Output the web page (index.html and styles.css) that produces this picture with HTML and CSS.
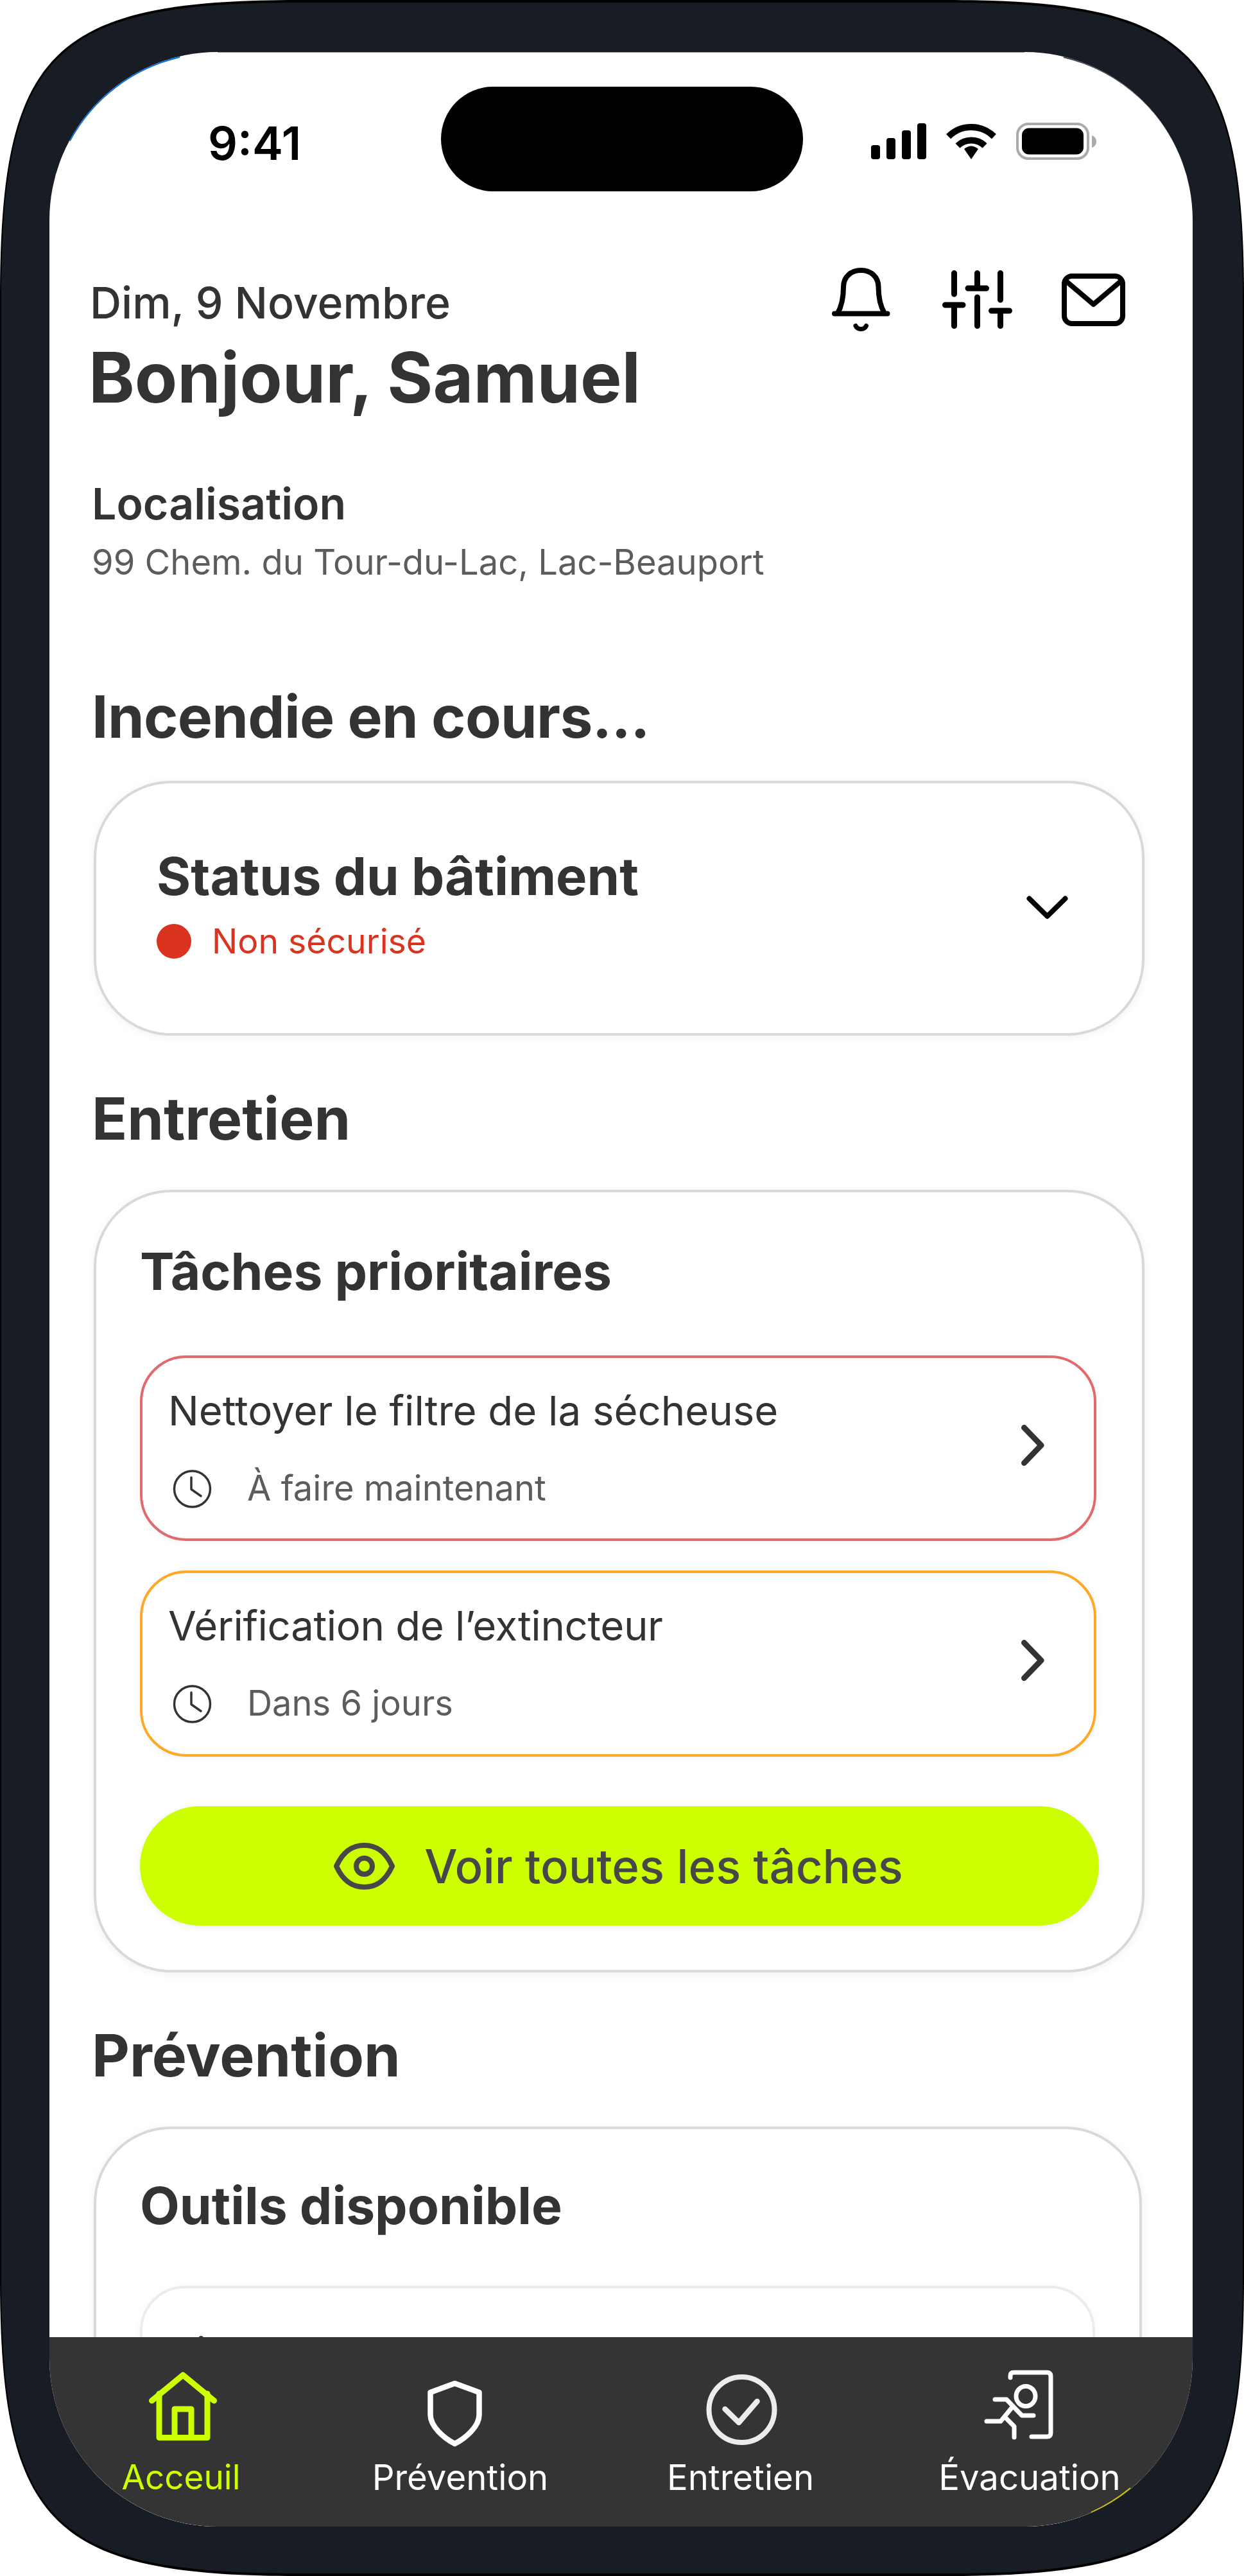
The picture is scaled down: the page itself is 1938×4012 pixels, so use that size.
FILE: index.html
```html
<!DOCTYPE html>
<html lang="fr">
<head>
<meta charset="utf-8">
<title>Accueil</title>
<link rel="stylesheet" href="styles.css">
</head>
<body>
<div class="phone">
  <div class="bezel">
    <div class="screen">
      <div class="statusbar">
        <div class="time">9:41</div>
        <div class="island"></div>
        <div class="status-icons">
          <svg class="ic-signal" width="86" height="56" viewBox="0 0 86 56"><rect x="0" y="34" width="14" height="22" rx="4"/><rect x="24" y="23" width="14" height="33" rx="4"/><rect x="48" y="11" width="14" height="45" rx="4"/><rect x="72" y="0" width="14" height="56" rx="4"/></svg>
          <svg class="ic-wifi" width="78" height="56" viewBox="0 0 78 56"><path d="M3.6 20.6A50 50 0 0 1 74.4 20.6" fill="none" stroke="#000" stroke-width="10"/><path d="M18 35A30 30 0 0 1 60 35" fill="none" stroke="#000" stroke-width="10"/><path d="M39 56L28 40Q39 31 50 40Z"/></svg>
          <svg class="ic-battery" width="125" height="58" viewBox="0 0 125 58"><rect x="2" y="2" width="110" height="54" rx="17" fill="none" stroke="#aaa" stroke-width="4"/><rect x="9" y="8.500" width="96" height="41" rx="11"/><path d="M118 20C122 21 125 25 125 29.500S122 38 118 39Z" fill="#aaa"/></svg>
        </div>
      </div>

      <main class="content">
        <header class="header">
          <div class="greeting">
            <div class="date">Dim, 9 Novembre</div>
            <h1 class="hello">Bonjour, Samuel</h1>
          </div>
          <div class="header-icons">
            <svg class="ic-bell" width="91" height="99" viewBox="0 0 91 99" fill="none" stroke="#000" stroke-width="8" stroke-linecap="round" stroke-linejoin="round"><path d="M4 71.500H86.500"/><path d="M9 71C15 60 18 45 18 30C18 14 30 4 45.300 4S72.500 14 72.500 30C72.500 45 75.500 60 82 71"/><path d="M37 90.500C40 97 50.500 97 53.500 90.500" stroke-width="7"/></svg>
            <svg class="ic-sliders" width="109" height="91" viewBox="0 0 109 91" fill="none" stroke="#000" stroke-width="9" stroke-linecap="round"><path d="M18.500 4.500V37M4.500 54H32M18.500 54V86.500"/><path d="M54.500 4.500V28M40 28H68.500M54.500 42V86.500"/><path d="M90.500 4.500V46M76.500 63H104.500M90.500 63V86.500"/></svg>
            <svg class="ic-mail" width="99" height="82" viewBox="0 0 99 82" fill="none" stroke="#000" stroke-width="8" stroke-linejoin="round" stroke-linecap="round"><rect x="4" y="4" width="91" height="74" rx="12"/><path d="M7 12L49.500 48L92 12"/></svg>
          </div>
        </header>

        <section class="location">
          <div class="loc-title">Localisation</div>
          <div class="loc-addr">99 Chem. du Tour-du-Lac, Lac-Beauport</div>
        </section>

        <h2 class="section-title first">Incendie en cours...</h2>
        <div class="card status-card">
          <div class="status-text">
            <div class="card-title">Status du bâtiment</div>
            <div class="status-line"><span class="dot"></span><span>Non sécurisé</span></div>
          </div>
          <svg class="chev-down" width="65" height="37" viewBox="0 0 65 37" fill="none" stroke="#000" stroke-width="8" stroke-linecap="round" stroke-linejoin="round"><path d="M4.500 4.500L32.500 32L60.500 4.500"/></svg>
        </div>

        <h2 class="section-title">Entretien</h2>
        <div class="card task-card">
          <h3 class="card-title">Tâches prioritaires</h3>
          <div class="task urgent">
            <div class="task-body">
              <div class="task-name">Nettoyer le filtre de la sécheuse</div>
              <div class="task-due">
                <svg class="clock" width="61" height="60" viewBox="0 0 61 60" fill="none" stroke="#333" stroke-width="3.500" stroke-linecap="round" stroke-linejoin="round"><circle cx="30.500" cy="30" r="28"/><path d="M29 12V30.500L44 41"/></svg>
                <span>À faire maintenant</span>
              </div>
            </div>
            <svg class="chev-right" width="36" height="64" viewBox="0 0 36 64" fill="none" stroke="#333" stroke-width="9" stroke-linecap="round" stroke-linejoin="round"><path d="M4.500 4.500L31 32L4.500 59.500"/></svg>
          </div>
          <div class="task soon">
            <div class="task-body">
              <div class="task-name">Vérification de l’extincteur</div>
              <div class="task-due">
                <svg class="clock" width="61" height="60" viewBox="0 0 61 60" fill="none" stroke="#333" stroke-width="3.500" stroke-linecap="round" stroke-linejoin="round"><circle cx="30.500" cy="30" r="28"/><path d="M29 12V30.500L44 41"/></svg>
                <span>Dans 6 jours</span>
              </div>
            </div>
            <svg class="chev-right" width="36" height="64" viewBox="0 0 36 64" fill="none" stroke="#333" stroke-width="9" stroke-linecap="round" stroke-linejoin="round"><path d="M4.500 4.500L31 32L4.500 59.500"/></svg>
          </div>
          <div class="cta">
            <svg width="95" height="73" viewBox="0 0 95 73" fill="none" stroke="#474747" stroke-width="8" stroke-linejoin="round"><path d="M4 36.500C16 10 32 4 47.500 4S79 10 91 36.500C79 63 63 69 47.500 69S16 63 4 36.500Z"/><circle cx="47.500" cy="36.500" r="12.500"/></svg>
            <span>Voir toutes les tâches</span>
          </div>
        </div>

        <h2 class="section-title">Prévention</h2>
        <div class="card tools-card">
          <h3 class="card-title">Outils disponible</h3>
          <div class="tool"><div class="task-name">Piste</div></div>
        </div>
      </main>

      <nav class="tabbar">
        <div class="tab active">
          <svg width="120" height="120" viewBox="0 0 120 120" fill="none" stroke="#CCFF00" stroke-width="9" stroke-linecap="round" stroke-linejoin="round"><g transform="translate(9 3)"><path d="M5.500 45L54 5L102.500 45"/><path d="M17 34V102.500H92V34"/><path d="M41 102V58H67V102"/></g></svg>
          <span>Acceuil</span>
        </div>
        <div class="tab">
          <svg width="120" height="120" viewBox="0 0 120 120" fill="none" stroke="#fff" stroke-width="8.500" stroke-linejoin="round"><g transform="translate(9 16)"><path d="M42.500 5L4.500 19V54C4.500 72 25 90 42.500 99C60 90 80.500 72 80.500 54V19Z"/></g></svg>
          <span>Prévention</span>
        </div>
        <div class="tab">
          <svg width="120" height="120" viewBox="0 0 120 120" fill="none" stroke="#ececec" stroke-linecap="round" stroke-linejoin="round"><g transform="translate(6.500 6)"><circle cx="55" cy="56" r="51" stroke-width="8"/><path d="M29 55L50.500 76L79 43" stroke-width="8.500"/></g></svg>
          <span>Entretien</span>
        </div>
        <div class="tab">
          <svg width="120" height="120" viewBox="0 0 120 120" fill="none" stroke="#fff" stroke-width="7" stroke-linecap="round" stroke-linejoin="round"><g transform="translate(-10 0)"><path d="M40 12V9Q40 4 45 4H97Q103 4 103 10V98Q103 104 97 104H73"/><ellipse cx="64" cy="41" rx="15" ry="15.500"/><path d="M16 46H34L58 71H76"/><path d="M3 80H25L43 58"/><path d="M34 76L46 88V105"/></g></svg>
          <span>Évacuation</span>
        </div>
      </nav>

      <svg class="edge-glints" width="1781" height="3854" viewBox="0 0 1781 3854" fill="none">
        <path d="M262 0.500H1519" stroke="#8a8f96" stroke-width="1"/>
        <path d="M31 138A262 262 0 0 1 203 7" stroke="#0a6fe0" stroke-width="4"/>
        <path d="M1580 7A262 262 0 0 1 1772 187" stroke="#3d4250" stroke-width="4"/>
        <path d="M1684 3794A262 262 0 0 1 1623 3832" stroke="#d8c400" stroke-width="2"/>
      </svg>
    </div>
  </div>
</div>
</body>
</html>
```
FILE: styles.css
```css
* { box-sizing: border-box; }

html, body {
  margin: 0;
  background: #fff;
}

body {
  font-family: Inter, "Noto Sans", sans-serif;
  color: #333;
}

h1, h2, h3 {
  margin: 0;
}

.phone {
  width: 1938px;
  height: 4012px;
  background: #000;
  clip-path: path('M465 0H1473C1858 0 1938 80 1938 465V3547C1938 3932 1858 4012 1473 4012H465C80 4012 0 3932 0 3547V465C0 80 80 0 465 0Z');
}

.bezel {
  height: 4012px;
  padding: 81px 80px 77px 77px;
  background: #181c24;
  clip-path: path('M465 4H1473C1856 4 1936 82 1936 465V3547C1936 3930 1856 4008 1473 4008H465C82 4008 2 3930 2 3547V465C2 82 82 4 465 4Z');
}

.screen {
  position: relative;
  width: 1781px;
  height: 3854px;
  overflow: hidden;
  background: #fff;
  border-radius: 262px;
}

.statusbar {
  display: flex;
  align-items: flex-start;
  padding: 54px 0 0 247px;
}

.time {
  width: 363px;
  margin-top: 45px;
  font-size: 72px;
  font-weight: 600;
  line-height: 86px;
  color: #000;
}

.island {
  width: 564px;
  height: 163px;
  background: #000;
  border-radius: 82px;
}

.status-icons {
  display: flex;
  align-items: center;
  gap: 31px;
  height: 58px;
  margin: 56px 0 0 106px;
}

.content {
  padding-left: 66px;
}

.header {
  display: flex;
  align-items: flex-start;
  justify-content: space-between;
  margin: 119px 0 0 -5px;
  padding-right: 105px;
}

.greeting {
  padding-top: 14px;
}

.date {
  margin-left: 2px;
  font-size: 68px;
  font-weight: 550;
  line-height: 80px;
}

.hello {
  margin-top: 17px;
  font-size: 108.500px;
  font-weight: 700;
  line-height: 120px;
}

.header-icons {
  display: flex;
  align-items: center;
  height: 99px;
}

.ic-bell { margin-right: 81px; }
.ic-sliders { margin-right: 77px; }

.location {
  margin-top: 96px;
}

.loc-title {
  font-size: 68px;
  font-weight: 600;
  line-height: 80px;
}

.loc-addr {
  margin-top: 18px;
  font-size: 54.300px;
  line-height: 66px;
  color: #5c5c5c;
}

.section-title {
  margin: 74px 0 56px;
  font-size: 91px;
  font-weight: 650;
  line-height: 110px;
}

.section-title.first {
  margin: 153px 0 45px;
  letter-spacing: -0.650px;
}

.card {
  width: 1637px;
  margin-left: 3px;
  background: #fff;
  border: 4px solid #d9d9d9;
  border-radius: 120px;
  box-shadow: 0 2px 14px rgba(0, 0, 0, 0.06);
}

.card-title {
  font-size: 80.300px;
  font-weight: 650;
  line-height: 100px;
}

.status-card {
  display: flex;
  justify-content: space-between;
  height: 397px;
  padding: 95px 115px 0 94px;
}

.status-card .card-title {
  font-size: 81.300px;
}

.status-line {
  display: flex;
  align-items: center;
  gap: 32px;
  margin-top: 18px;
  font-size: 53.500px;
  line-height: 66px;
  color: #da3420;
}

.dot {
  width: 54px;
  height: 54px;
  border-radius: 50%;
  background: #da3420;
}

.chev-down {
  align-self: center;
  margin-top: -97px;
}

.task-card {
  padding: 73px 71px 69px 68px;
}

.task {
  display: flex;
  align-items: center;
  justify-content: space-between;
  width: 1490px;
  height: 289px;
  padding: 44px 77px 0 40px;
  border: 4px solid;
  border-radius: 72px;
  box-shadow: 0 2px 12px rgba(0, 0, 0, 0.05);
}

.task.urgent {
  margin-top: 81px;
  border-color: #e16a6a;
}

.task.soon {
  margin-top: 46px;
  height: 290px;
  border-color: #ffa726;
}

.task.soon .task-name {
  letter-spacing: -0.360px;
}

.task-body {
  align-self: flex-start;
}

.task-name {
  font-size: 63.500px;
  line-height: 76px;
  color: #333;
}

.task-due {
  display: flex;
  align-items: center;
  gap: 55px;
  margin-top: 49px;
  font-size: 54.200px;
  line-height: 66px;
  color: #5c5c5c;
}

.clock {
  margin: 4px 0 0 7px;
}

.chev-right {
  margin-top: -54px;
}

.cta {
  display: flex;
  align-items: center;
  justify-content: center;
  gap: 46px;
  width: 1494px;
  height: 186px;
  margin-top: 77px;
  padding-right: 3px;
  background: #ccff00;
  border-radius: 93px;
  box-shadow: 0 2px 10px rgba(0, 0, 0, 0.08);
  font-size: 72.500px;
  font-weight: 500;
  color: #474747;
}

.tools-card {
  width: 1633px;
  height: 1000px;
  padding: 69px 71px 0 68px;
}

.tool {
  width: 1488px;
  height: 400px;
  margin-top: 75px;
  padding: 61px 0 0 43px;
  border: 4px solid #ececec;
  border-radius: 70px;
  box-shadow: 0 2px 12px rgba(0, 0, 0, 0.04);
}

.tabbar {
  position: absolute;
  left: 0;
  right: 0;
  bottom: 0;
  display: grid;
  grid-template-columns: 410px 460px 413px 488px;
  height: 295px;
  padding-top: 51px;
  background: #343434;
}

.tab {
  display: flex;
  flex-direction: column;
  align-items: center;
  font-size: 54.500px;
  line-height: 64px;
  color: #fff;
}

.tab span {
  margin-top: 15px;
  white-space: nowrap;
}

.tab svg {
  overflow: visible;
}

.tab.active {
  font-size: 53px;
  color: #ccff00;
}

.edge-glints {
  position: absolute;
  left: 0;
  top: 0;
  pointer-events: none;
}
```
